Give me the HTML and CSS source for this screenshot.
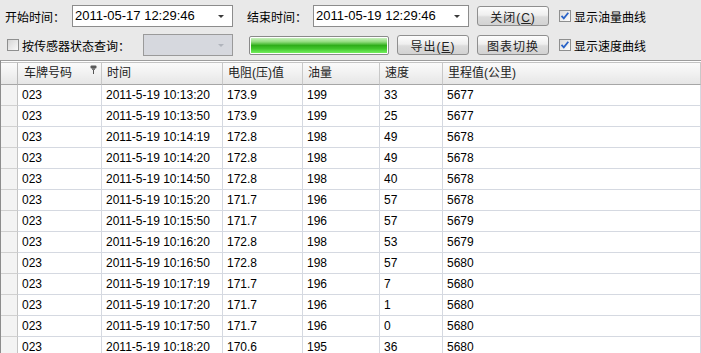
FILE: index.html
```html
<!DOCTYPE html>
<html lang="zh-CN">
<head>
    <meta charset="UTF-8">
    <title>传感器数据查询</title>
    <link rel="stylesheet" href="styles.css">
</head>
<body>

    <div class="toolbar">
        <div class="bar bar-top">
            <span class="label">开始时间：</span>
            <div class="combo combo-start"><span>2011-05-17 12:29:46</span><i class="arrow"></i></div>
            <span class="label label-end">结束时间：</span>
            <div class="combo combo-end"><span>2011-05-19 12:29:46</span><i class="arrow"></i></div>
            <button class="btn">关闭(<u>C</u>)</button>
            <label class="check check-right">
                <svg width="12" height="12" viewBox="0 0 12 12"><defs><linearGradient id="cb1" x1="0" y1="0" x2="1" y2="1"><stop offset="0" stop-color="#d9d9d9"/><stop offset="1" stop-color="#ffffff"/></linearGradient></defs><rect x="0.5" y="0.5" width="11" height="11" fill="url(#cb1)" stroke="#8e8f8f"/><path d="M2.5 5.8 L4.8 8.3 L9.3 2.8" fill="none" stroke="#2a63c7" stroke-width="1.8"/></svg>
                显示油量曲线
            </label>
        </div>
        <div class="bar bar-bottom">
            <label class="check check-sensor">
                <svg width="12" height="12" viewBox="0 0 12 12"><defs><linearGradient id="cb2" x1="0" y1="0" x2="1" y2="1"><stop offset="0" stop-color="#d4d4d4"/><stop offset="1" stop-color="#fbfbfb"/></linearGradient></defs><rect x="0.5" y="0.5" width="11" height="11" fill="url(#cb2)" stroke="#8e8f8f"/></svg>
                按传感器状态查询：
            </label>
            <div class="combo combo-disabled"><span></span><i class="arrow"></i></div>
            <div class="progress"><div class="progress-fill"></div></div>
            <button class="btn btn-export">导出(<u>E</u>)</button>
            <button class="btn">图表切换</button>
            <label class="check check-right">
                <svg width="12" height="12" viewBox="0 0 12 12"><defs><linearGradient id="cb3" x1="0" y1="0" x2="1" y2="1"><stop offset="0" stop-color="#d9d9d9"/><stop offset="1" stop-color="#ffffff"/></linearGradient></defs><rect x="0.5" y="0.5" width="11" height="11" fill="url(#cb3)" stroke="#8e8f8f"/><path d="M2.5 5.8 L4.8 8.3 L9.3 2.8" fill="none" stroke="#2a63c7" stroke-width="1.8"/></svg>
                显示速度曲线
            </label>
        </div>
    </div>

    <div class="grid">
        <table>
            <colgroup>
                <col class="c-row">
                <col class="c-plate">
                <col class="c-time">
                <col class="c-volt">
                <col class="c-oil">
                <col class="c-speed">
                <col class="c-mile">
            </colgroup>
            <thead>
                <tr>
                    <th class="row-head"></th>
                    <th class="pin-cell">车牌号码
                        <svg class="pin" width="7" height="9" viewBox="0 0 7 9"><rect x="0.5" y="0.5" width="6" height="3" rx="1" fill="#5a5a5a"/><rect x="2" y="3" width="3" height="2" fill="#7a7a7a"/><rect x="3" y="5" width="1" height="4" fill="#555"/></svg>
                    </th>
                    <th>时间</th>
                    <th>电阻(压)值</th>
                    <th>油量</th>
                    <th>速度</th>
                    <th>里程值(公里)</th>
                </tr>
            </thead>
            <tbody id="rows"></tbody>
        </table>
    </div>

    <script>
        var data = [
            ["023", "2011-5-19 10:13:20", "173.9", "199", "33", "5677"],
            ["023", "2011-5-19 10:13:50", "173.9", "199", "25", "5677"],
            ["023", "2011-5-19 10:14:19", "172.8", "198", "49", "5678"],
            ["023", "2011-5-19 10:14:20", "172.8", "198", "49", "5678"],
            ["023", "2011-5-19 10:14:50", "172.8", "198", "40", "5678"],
            ["023", "2011-5-19 10:15:20", "171.7", "196", "57", "5678"],
            ["023", "2011-5-19 10:15:50", "171.7", "196", "57", "5679"],
            ["023", "2011-5-19 10:16:20", "172.8", "198", "53", "5679"],
            ["023", "2011-5-19 10:16:50", "172.8", "198", "57", "5680"],
            ["023", "2011-5-19 10:17:19", "171.7", "196", "7", "5680"],
            ["023", "2011-5-19 10:17:20", "171.7", "196", "1", "5680"],
            ["023", "2011-5-19 10:17:50", "171.7", "196", "0", "5680"],
            ["023", "2011-5-19 10:18:20", "170.6", "195", "36", "5680"]
        ];

        var body = document.getElementById("rows");
        data.forEach(function (row) {
            var tr = document.createElement("tr");
            var head = document.createElement("td");
            head.className = "row-head";
            tr.appendChild(head);
            row.forEach(function (value) {
                var td = document.createElement("td");
                td.innerText = value;
                tr.appendChild(td);
            });
            body.appendChild(tr);
        });
    </script>

</body>
</html>
```

FILE: styles.css
```css
body {
    margin: 0;
    background: #e9e9e9;
    font-family: "Liberation Sans", "Noto Sans CJK SC", sans-serif;
    font-size: 12px;
    color: #000;
    overflow: hidden;
}
.toolbar {
    height: 60px;
    box-sizing: border-box;
    padding-top: 5px;
    background: #e9e9e9;
}
.bar {
    display: flex;
    align-items: center;
    height: 22px;
}
.bar-top {
    padding-left: 5px;
}
.bar-bottom {
    margin-top: 7px;
    padding-left: 7px;
}
.label {
    width: 67px;
    white-space: nowrap;
}
.label-end {
    margin-left: 14px;
    width: 66px;
}
.combo {
    position: relative;
    height: 22px;
    box-sizing: border-box;
    border: 1px solid #8c8c8c;
    background: #fff;
    font-size: 13px;
    line-height: 20px;
    padding-left: 2px;
}
.combo-start {
    width: 161px;
}
.combo-end {
    width: 156px;
}
.combo-disabled {
    width: 90px;
    background: #d6d8de;
    border-color: #9a9a9a;
}
.arrow {
    position: absolute;
    right: 8px;
    top: 9px;
    width: 0;
    height: 0;
    border-left: 3px solid transparent;
    border-right: 3px solid transparent;
    border-top: 3px solid #3a3a3a;
}
.combo-disabled .arrow {
    border-top-color: #b0b4bc;
}
.btn {
    margin-left: 8px;
    width: 72px;
    height: 20px;
    padding: 0;
    border: 1px solid #8f8f8f;
    border-radius: 3px;
    background: linear-gradient(#fdfdfd, #efefef 45%, #dcdcdc 55%, #d2d2d2);
    font-family: "Liberation Sans", "Noto Sans CJK SC", sans-serif;
    font-size: 12px;
    color: #222;
    letter-spacing: 1px;
}
.btn-export {
    margin-left: 8px;
}
.check {
    display: flex;
    align-items: center;
    white-space: nowrap;
}
.check svg {
    margin-right: 3px;
}
.check-right {
    margin-left: 10px;
}
.check-sensor {
    width: 136px;
}
.progress {
    margin-left: 16px;
    width: 140px;
    height: 19px;
    box-sizing: border-box;
    border: 1px solid #8a8a8a;
    border-radius: 2px;
    background: #fff;
    padding: 1px;
}
.progress-fill {
    height: 100%;
    background: linear-gradient(#c9f0be, #93dd80 25%, #2fae1a 50%, #3fc42a 70%, #72ef5c);
}
.grid {
    border-top: 1px solid #9d9d9d;
    border-left: 1px solid #8c8c8c;
    padding-top: 1px;
    background: #fff;
    height: 300px;
}
table {
    table-layout: fixed;
    border-collapse: separate;
    border-spacing: 0;
    width: 700px;
}
.c-row { width: 17px; }
.c-plate { width: 84px; }
.c-time { width: 121px; }
.c-volt { width: 80px; }
.c-oil { width: 77px; }
.c-speed { width: 63px; }
.c-mile { width: 258px; }
th {
    position: relative;
    height: 23px;
    box-sizing: border-box;
    padding: 0 5px;
    text-align: left;
    font-weight: normal;
    color: #222;
    line-height: 21px;
    border-top: 1px solid #c4c4c4;
    border-right: 1px solid #c8c8c8;
    border-bottom: 1px solid #a6a6a6;
    background: linear-gradient(#fbfbfb, #f1f1f1 50%, #e6e6e6);
    white-space: nowrap;
    overflow: hidden;
}
th.pin-cell {
    padding-left: 6px;
}
.pin {
    position: absolute;
    right: 4px;
    top: 2px;
}
td {
    padding: 0 4px;
    line-height: 20px;
    border-right: 1px solid #d5d9e1;
    border-bottom: 1px solid #d5d9e1;
    white-space: nowrap;
    overflow: hidden;
}
td.row-head {
    background: #f3f3f3;
    border-right-color: #c4c4c4;
    border-bottom-color: #d0d0d0;
}
th.row-head {
    padding: 0;
    border-right-color: #b8b8b8;
}
```
